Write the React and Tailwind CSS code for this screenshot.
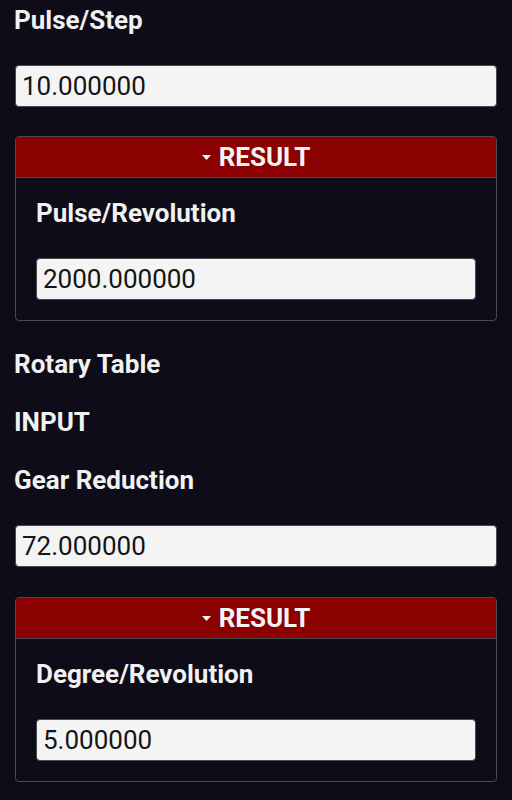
import React from 'react';

const Label = ({ children, className = '' }) => (
  <div className={`text-[26px] font-bold leading-[28px] text-[#f1f1f1] ${className}`}>{children}</div>
);

const NumberField = ({ value, className = '' }) => (
  <input
    readOnly
    value={value}
    className={`block w-full h-[42px] rounded-[4px] border border-[#4a4a4a] bg-[#f4f4f4] pl-[6px] text-[26px] text-[#151515] outline-none font-['Roboto',sans-serif] ${className}`}
  />
);

const ResultPanel = ({ label, value, className = '' }) => (
  <div className={`rounded-[4px] border border-[#4a4a52] overflow-hidden ${className}`}>
    {/* Red header with caret */}
    <div className="h-[41px] bg-[#8b0000] border-b border-[#4a4a52] flex items-center justify-center gap-[8px]">
      <svg width="9" height="5" viewBox="0 0 9 5">
        <path d="M0 0 L9 0 L4.5 5 Z" fill="#f2f2f2" />
      </svg>
      <span className="text-[26px] font-bold text-[#f4f4f4] leading-none">RESULT</span>
    </div>
    <div className="px-[20px] pt-[21px] pb-[20px]">
      <Label className="mb-[31px]">{label}</Label>
      <NumberField value={value} />
    </div>
  </div>
);

export default function App() {
  return (
    <div className="min-h-screen bg-[#0d0c18] px-[15px] pt-[6px] font-['Roboto',sans-serif]">
      <Label className="mb-[31px] -ml-[1px]">Pulse/Step</Label>
      <NumberField value="10.000000" className="mb-[29px]" />
      <ResultPanel label="Pulse/Revolution" value="2000.000000" className="mb-[29px]" />

      <Label className="mb-[30px] -ml-[1px]">Rotary Table</Label>
      <Label className="mb-[30px] -ml-[1px]">INPUT</Label>
      <Label className="mb-[31px] -ml-[1px]">Gear Reduction</Label>
      <NumberField value="72.000000" className="mb-[30px]" />
      <ResultPanel label="Degree/Revolution" value="5.000000" />
    </div>
  );
}
